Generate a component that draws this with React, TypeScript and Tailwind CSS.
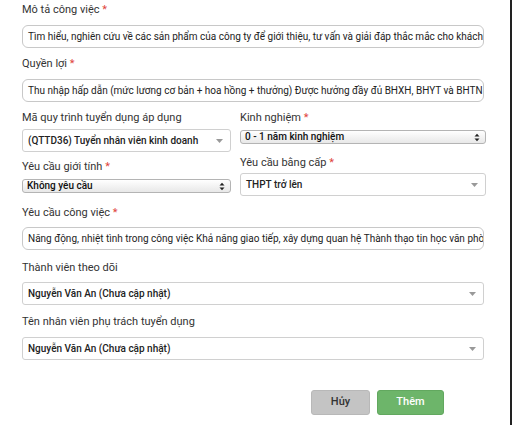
import React from "react";

const font = { fontFamily: "Roboto, 'Liberation Sans', sans-serif" };

function Label({ text, req }: { text: string; req?: boolean }) {
  return (
    <div className="text-[11px] leading-[14px] text-[#333] whitespace-nowrap">
      {text}
      {req && <span className="text-[#e0433b]"> *</span>}
    </div>
  );
}

function TextBox({ value }: { value: string }) {
  return (
    <div className="h-[23px] w-[462px] border border-[#c8c8c8] rounded-[6px] flex items-center px-[5px] overflow-hidden">
      <span className="text-[10px] text-[#222] whitespace-nowrap">{value}</span>
    </div>
  );
}

function Caret() {
  return (
    <svg width="7" height="4" viewBox="0 0 7 4" className="shrink-0">
      <path d="M0 0 L7 0 L3.5 4 Z" fill="#999" />
    </svg>
  );
}

function Select({ value, w }: { value: string; w: string }) {
  return (
    <div className={`h-[23px] ${w} border border-[#d0d0d0] rounded-[3px] flex items-center justify-between pl-[5px] pr-[7px]`}>
      <span className="text-[10px] text-[#222] font-medium whitespace-nowrap">{value}</span>
      <Caret />
    </div>
  );
}

function UpDown() {
  return (
    <svg width="6" height="9" viewBox="0 0 6 9" className="shrink-0">
      <path d="M0.5 3.5 L3 0.8 L5.5 3.5 Z" fill="#222" />
      <path d="M0.5 5.5 L3 8.2 L5.5 5.5 Z" fill="#222" />
    </svg>
  );
}

function NativeSelect({ value, w }: { value: string; w: string }) {
  return (
    <div className={`h-[14px] ${w} border border-[#b4b4b4] rounded-[3px] bg-gradient-to-b from-white to-[#e8e8e8] flex items-center justify-between pl-[4px] pr-[5px]`}>
      <span className="text-[10px] leading-[12px] text-[#111] font-medium whitespace-nowrap">{value}</span>
      <UpDown />
    </div>
  );
}

export default function App() {
  return (
    <div className="w-[512px] h-[425px] bg-white border-r-2 border-[#222] overflow-hidden" style={font}>
      <div className="pl-[22px] pt-[3px] flex flex-col">
        <Label text="Mô tả công việc" req />
        <div className="mt-[8px]">
          <TextBox value="Tìm hiểu, nghiên cứu về các sản phẩm của công ty để giới thiệu, tư vấn và giải đáp thắc mắc cho khách hàng" />
        </div>
        <div className="mt-[9px]">
          <Label text="Quyền lợi" req />
        </div>
        <div className="mt-[8px]">
          <TextBox value="Thu nhập hấp dẫn (mức lương cơ bản + hoa hồng + thưởng) Được hưởng đầy đủ BHXH, BHYT và BHTN theo quy định" />
        </div>
        <div className="mt-[9px] flex gap-[9px]">
          <div className="w-[209px] flex flex-col">
            <Label text="Mã quy trình tuyển dụng áp dụng" />
            <div className="mt-[4px]">
              <Select value="(QTTD36) Tuyển nhân viên kinh doanh" w="w-[209px]" />
            </div>
            <div className="mt-[8px]">
              <Label text="Yêu cầu giới tính" req />
            </div>
            <div className="mt-[5px]">
              <NativeSelect value="Không yêu cầu" w="w-[209px]" />
            </div>
          </div>
          <div className="w-[246px] flex flex-col">
            <Label text="Kinh nghiệm" req />
            <div className="mt-[5px]">
              <NativeSelect value="0 - 1 năm kinh nghiệm" w="w-[246px]" />
            </div>
            <div className="mt-[12px]">
              <Label text="Yêu cầu bằng cấp" req />
            </div>
            <div className="mt-[3px]">
              <Select value="THPT trở lên" w="w-[246px]" />
            </div>
          </div>
        </div>
        <div className="mt-[10px]">
          <Label text="Yêu cầu công việc" req />
        </div>
        <div className="mt-[7px]">
          <TextBox value="Năng động, nhiệt tình trong công việc Khả năng giao tiếp, xây dựng quan hệ Thành thạo tin học văn phòng" />
        </div>
        <div className="mt-[11px]">
          <Label text="Thành viên theo dõi" />
        </div>
        <div className="mt-[7px]">
          <Select value="Nguyễn Văn An (Chưa cập nhật)" w="w-[462px]" />
        </div>
        <div className="mt-[10px]">
          <Label text="Tên nhân viên phụ trách tuyển dụng" />
        </div>
        <div className="mt-[8px]">
          <Select value="Nguyễn Văn An (Chưa cập nhật)" w="w-[462px]" />
        </div>
        <div className="mt-[30px] flex gap-[7px] pl-[289px]">
          <button className="w-[59px] h-[25px] rounded-[3px] bg-[#c4c4c4] border border-[#b8b8b8] text-[11px] font-medium text-[#333]">Hủy</button>
          <button className="w-[67px] h-[25px] rounded-[3px] bg-[#6db56a] border border-[#62a85f] text-[11px] font-medium text-white">Thêm</button>
        </div>
      </div>
    </div>
  );
}
